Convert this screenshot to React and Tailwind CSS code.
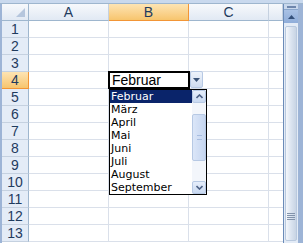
const columns = ['A', 'B', 'C'];
const rows = [1, 2, 3, 4, 5, 6, 7, 8, 9, 10, 11, 12, 13];
const months = ['Februar', 'März', 'April', 'Mai', 'Juni', 'Juli', 'August', 'September'];

function ColHeader({ label, active }) {
  return (
    <div
      className={
        active
          ? 'h-[17px] flex items-center justify-center border-r border-b border-r-[#f29536] border-b-[#f29536] bg-gradient-to-b from-[#fde4b3] to-[#f7c56d] text-[#1f3b5e] text-[14px]'
          : 'h-[17px] flex items-center justify-center border-r border-b border-r-[#c5d1e0] border-b-[#9eb6ce] bg-gradient-to-b from-[#f7f9fc] to-[#e1e9f4] text-[#1f3b5e] text-[14px]'
      }
    >
      {label}
    </div>
  );
}

function RowHeader({ n, active }) {
  return (
    <div
      className={
        active
          ? 'h-[17px] flex items-center justify-center border-r border-b border-r-[#f29536] border-b-[#f29536] bg-gradient-to-b from-[#fde4b3] to-[#f7c56d] text-[#1f3b5e] text-[14px]'
          : 'h-[17px] flex items-center justify-center border-r border-b border-r-[#9eb6ce] border-b-[#c5d1e0] bg-[#e4ecf7] text-[#1f3b5e] text-[14px]'
      }
    >
      {n}
    </div>
  );
}

function DropList() {
  return (
    <div className="absolute left-[107px] top-[85px] w-[98px] h-[106px] bg-white border border-black flex font-['DejaVu_Sans',Tahoma,sans-serif] text-[11px] leading-[13px]">
      <div className="flex-1 flex flex-col overflow-hidden">
        {months.map((m, i) => (
          <div
            key={m}
            className={i === 0 ? 'h-[13px] px-[1px] bg-[#0a246a] text-white whitespace-nowrap' : 'h-[13px] px-[1px] text-black whitespace-nowrap'}
          >
            {m}
          </div>
        ))}
      </div>
      <div className="w-[14px] flex flex-col bg-[#f3f6fb]">
        <div className="h-[13px] flex items-center justify-center rounded-[2px] border border-[#b7c9e4] bg-gradient-to-b from-[#e6eefb] to-[#c9d9f1]">
          <svg width="7" height="5" viewBox="0 0 7 5">
            <path d="M0.5 4 L3.5 1 L6.5 4" fill="none" stroke="#4d6185" strokeWidth="1.6" />
          </svg>
        </div>
        <div className="flex-1 flex flex-col pt-[11px] pb-[20px]">
          <div className="flex-1 rounded-[2px] border border-[#b7c9e4] bg-gradient-to-r from-[#dbe6f8] to-[#c6d6f0] flex items-center justify-center">
            <div className="w-[5px] h-[5px] border-y border-[#a7bde0]" />
          </div>
        </div>
        <div className="h-[13px] flex items-center justify-center rounded-[2px] border border-[#b7c9e4] bg-gradient-to-b from-[#e6eefb] to-[#c9d9f1]">
          <svg width="7" height="5" viewBox="0 0 7 5">
            <path d="M0.5 1 L3.5 4 L6.5 1" fill="none" stroke="#4d6185" strokeWidth="1.6" />
          </svg>
        </div>
      </div>
    </div>
  );
}

function VScroll() {
  return (
    <div className="w-[20px] flex bg-[#9db4d6]">
      <div className="w-[15px] flex flex-col border-l border-[#6b8bb8] bg-[#e3ebf6]">
        <div className="h-[6px] flex items-center justify-center bg-[#c8d7ec] border-b border-[#8aa6cc]">
          <div className="w-[9px] h-[2px] border-y border-[#6e86ac] bg-white" />
        </div>
        <div className="h-[13px] flex items-center justify-center bg-gradient-to-b from-[#a9c1e5] to-[#8fadd9]">
          <svg width="7" height="4" viewBox="0 0 7 4">
            <path d="M0 4 L3.5 0 L7 4 Z" fill="#34507a" />
          </svg>
        </div>
        <div className="flex-1 flex flex-col p-[1px] pt-[3px] pb-[2px]">
          <div className="flex-1 flex flex-col justify-end items-center pb-[20px] rounded-[2px] border border-[#b9c9de] bg-gradient-to-r from-[#f4f7fb] via-[#dbe4f0] to-[#c8d4e4]">
            <div className="w-[8px] flex flex-col gap-[1px]">
              <div className="h-[1px] bg-[#8293ab]" />
              <div className="h-[1px] bg-[#8293ab]" />
              <div className="h-[1px] bg-[#8293ab]" />
              <div className="h-[1px] bg-[#8293ab]" />
            </div>
          </div>
        </div>
      </div>
    </div>
  );
}

export default function App() {
  return (
    <div className="w-[303px] h-[243px] overflow-hidden flex flex-col bg-white font-['Liberation_Sans',Arial,sans-serif]">
      <div className="h-[3px] bg-[#c9d9ee] border-b border-[#9eb6ce] box-content" />
      <div className="flex-1 flex min-h-0">
        <div className="flex-1 relative overflow-hidden border-l-2 border-[#9db4d6]">
          <div className="grid grid-cols-[27px_80px_80px_80px_1fr]">
            <div className="h-[17px] flex items-end justify-end pr-[3px] pb-[3px] border-r border-b border-r-[#9eb6ce] border-b-[#9eb6ce] bg-gradient-to-b from-[#f7f9fc] to-[#e1e9f4]">
              <svg width="9" height="9" viewBox="0 0 9 9">
                <path d="M9 0 L9 9 L0 9 Z" fill="#b5c6dd" />
              </svg>
            </div>
            {columns.map((c) => (
              <ColHeader key={c} label={c} active={c === 'B'} />
            ))}
            <ColHeader label="" />
            {rows.map((r) => (
              <div key={r} className="contents">
                <RowHeader n={r} active={r === 4} />
                <div className="h-[17px] border-r border-b border-[#dae0ea]" />
                {r === 4 ? (
                  <div className="h-[17px] border-b border-[#dae0ea] relative">
                    <div className="absolute -left-[1px] -top-[1px] w-[82px] h-[18px] border-2 border-black bg-white flex items-center pl-[2px] text-[14px] leading-none text-black">
                      Februar
                    </div>
                  </div>
                ) : (
                  <div className="h-[17px] border-r border-b border-[#dae0ea]" />
                )}
                <div className="h-[17px] border-r border-b border-[#dae0ea]" />
                <div className="h-[17px] border-b border-[#dae0ea]" />
              </div>
            ))}
          </div>
          <div className="absolute left-[188px] top-[67px] w-[13px] h-[17px] flex items-center justify-center rounded-[2px] border border-[#b7c9e4] bg-gradient-to-b from-[#eef3fb] to-[#cfdcef]">
            <svg width="7" height="4" viewBox="0 0 7 4">
              <path d="M0 0 L7 0 L3.5 4 Z" fill="#3b5478" />
            </svg>
          </div>
          <DropList />
        </div>
        <VScroll />
      </div>
    </div>
  );
}
